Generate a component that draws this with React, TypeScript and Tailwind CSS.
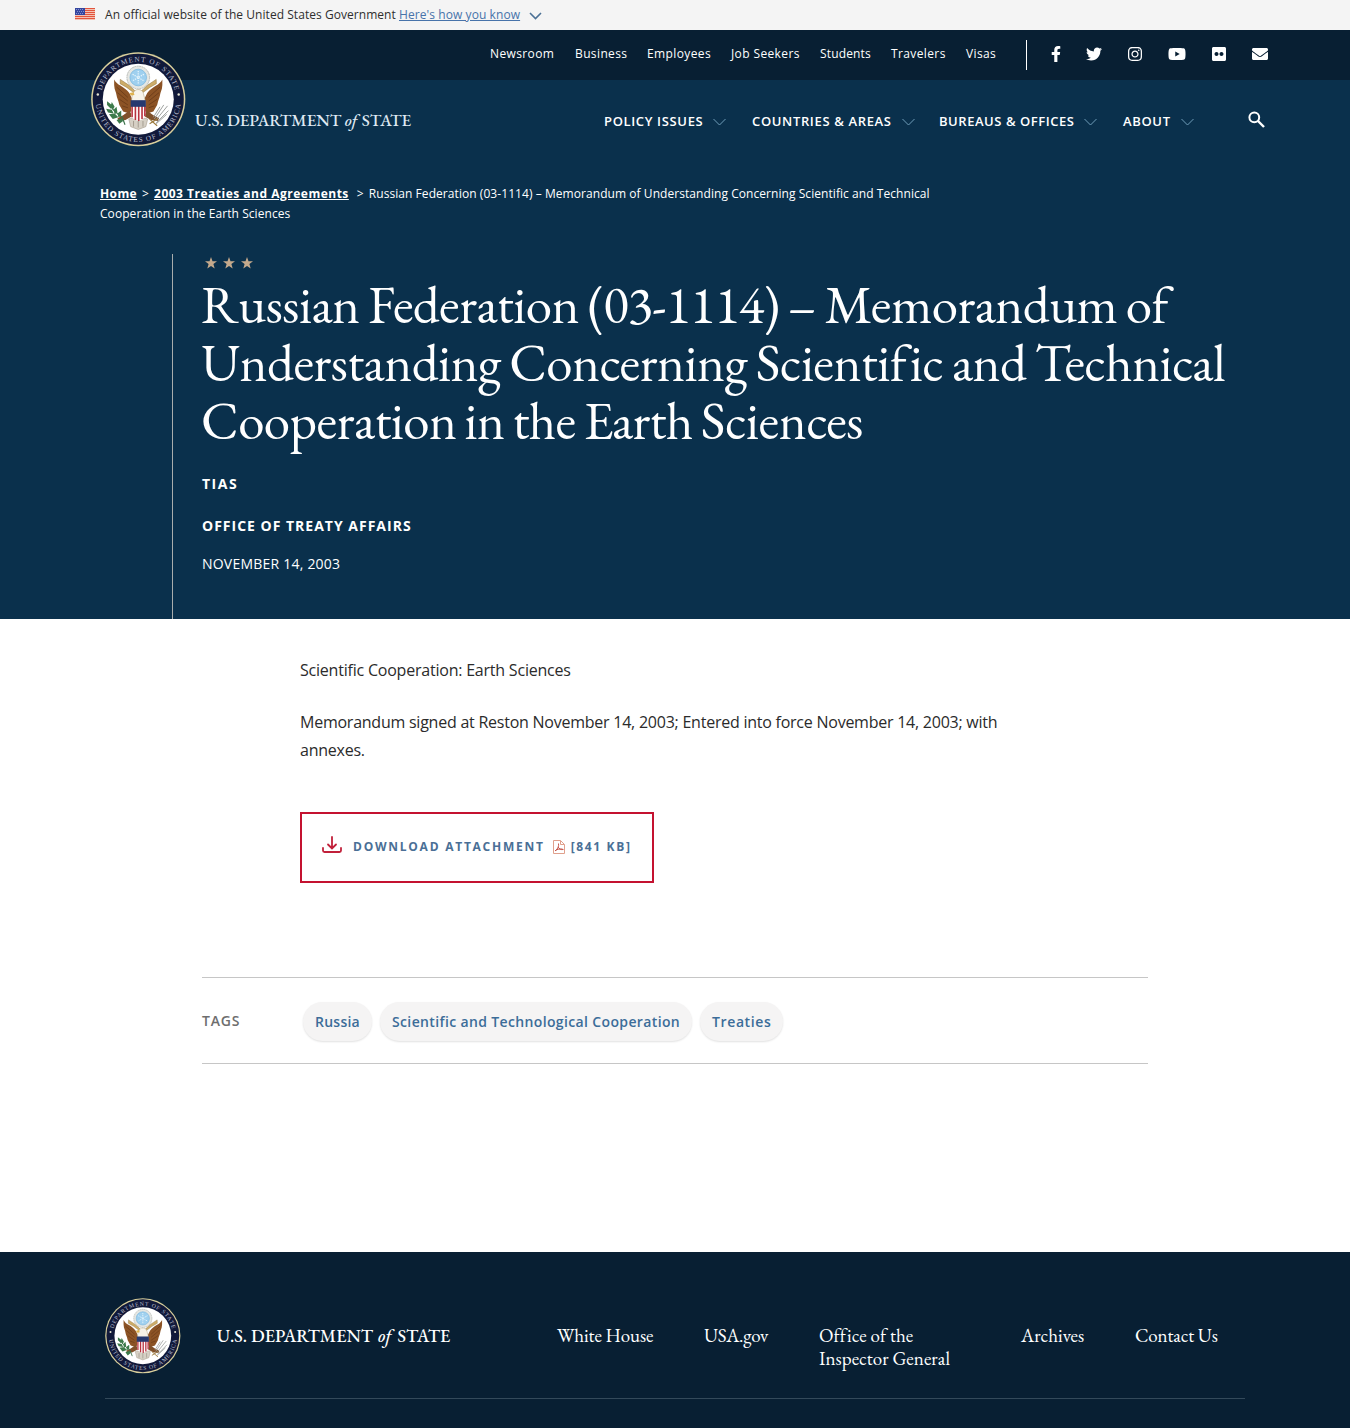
import React from "react";
import {
  FaFacebookF,
  FaTwitter,
  FaInstagram,
  FaYoutube,
  FaFlickr,
  FaEnvelope,
} from "react-icons/fa";

const SANS = "font-['Open_Sans','Noto_Sans',sans-serif]";
const SERIF = "font-['EB_Garamond','Liberation_Serif',serif]";

function Seal({ id, className }: { id: string; className: string }) {
  return (
    <svg viewBox="0 0 100 100" className={className} aria-label="Department of State seal">
      <defs>
        <path id={`${id}-top`} d="M 10.3 50 A 39.7 39.7 0 0 1 89.700 50" />
        <path id={`${id}-bottom`} d="M 4.800 50 A 45.200 45.200 0 0 0 95.200 50" />
      </defs>
      <circle cx="50" cy="50" r="49.8" fill="#d9cf9c" />
      <circle cx="50" cy="50" r="48.2" fill="#11193a" />
      <circle cx="50" cy="50" r="37.6" fill="#fff" />
      <text fill="#b9bfce" fontSize="7.700" fontFamily="Liberation Serif, serif" textAnchor="middle">
        <textPath href={`#${id}-top`} startOffset="50%" textLength="106">DEPARTMENT OF STATE</textPath>
      </text>
      <text fill="#b9bfce" fontSize="7.700" fontFamily="Liberation Serif, serif" textAnchor="middle">
        <textPath href={`#${id}-bottom`} startOffset="50%" textLength="131">UNITED STATES OF AMERICA</textPath>
      </text>
      <circle cx="7.2" cy="45" r="1.3" fill="#e5e3d2" />
      <circle cx="92.8" cy="45" r="1.3" fill="#e5e3d2" />
      {/* glory with constellation */}
      <circle cx="50" cy="27" r="12" fill="#e6e7e3" stroke="#b5b8b4" strokeWidth="1" strokeDasharray="2 .6" />
      <circle cx="50" cy="27" r="8.800" fill="#9fd0ef" stroke="#6fb1dd" strokeWidth=".7" />
      <path d="M50 20v14M44 23.500l12 7M56 23.500l-12 7" stroke="#e7f5fc" strokeWidth="1.300" strokeDasharray="1.400 1" />
      {/* wings */}
      <path d="M24.500 29c1.500 3 4 5 6.500 6.500 4 2.500 7 4.500 9.500 8l3 6v13l-4.500 2-5-1.500-2-3.500-2-3.500-1-4-1.500-4-1-4.500-1.500-4.500-.5-4z" fill="#8c5325" />
      <path d="M75.500 29c-1.500 3-4 5-6.500 6.500-4 2.500-7 4.500-9.500 8l-3 6v13l4.500 2 5-1.500 2-3.500 2-3.500 1-4 1.500-4 1-4.500 1.500-4.500.5-4z" fill="#8c5325" />
      <path d="M27 37l12 11M28 43l11 9M30 50l9 6M33 57l6 2M73 37l-12 11M72 43l-11 9M70 50l-9 6M67 57l-6 2" stroke="#5f3315" strokeWidth=".7" fill="none" />
      {/* ribbon */}
      <path d="M31 29l9 6 7 6.500-1.200 2-8-6-7-4zM69 29l-9 6-7 6.500 1.200 2 8-6 7-4z" fill="#cdac68" stroke="#8a6b35" strokeWidth=".5" />
      {/* legs and tail */}
      <path d="M41 62l-7 5-6 3 1.500 3 7-1 7-4zM59 62l7 5 6 3-1.500 3-7-1-7-4z" fill="#80502a" />
      <path d="M40 71c3-2 17-2 20 0l-2 8-8 3-8-3z" fill="#d6d0c5" stroke="#a39888" strokeWidth=".6" />
      <path d="M45 73v6M50 72v8M55 73v6" stroke="#8d8477" strokeWidth=".7" />
      {/* head */}
      <path d="M43 52c0-5 1-10 5-12 4-1 7 1 7.500 4l2 8z" fill="#f7f3e9" stroke="#b3a583" strokeWidth=".6" />
      <path d="M45 42.500l-4 1 1 2.500 4-.5z" fill="#dfb24c" />
      {/* shield */}
      <path d="M42.500 52h15v15c0 3-4 5-7.500 6-3.500-1-7.500-3-7.500-6z" fill="#fff" />
      <path d="M43.500 57v12M47 57v15M50.500 57v16M54 57v14M57 57v11" stroke="#b8323f" strokeWidth="1.700" />
      <path d="M42 51h16v7H42z" fill="#27396f" />
      {/* olive branch */}
      <path d="M19 55c3 5 8 10 14 14l3 8" fill="none" stroke="#39724a" strokeWidth="1.200" />
      <path d="M17 52l5 4-1 4-4-4zM22 53l3 5-2 3-2-4zM16 60l6 1 2 4-6-1zM27 58l1 6-3 2-1-5zM19 66l6-1 4 4-6 2zM32 62l0 6-3 1-1-4zM27 72l5-2 2 3-4 3z" fill="#3d7b4b" />
      {/* arrows */}
      <path d="M68 73l13-16M67 71l10-15M69 75l13-13M66 69l7-11M69 76l11-10" stroke="#999c9a" strokeWidth="1" />
      <path d="M62 71l8 7M62 76l8-5" stroke="#9c7a3d" strokeWidth="1.200" />
    </svg>
  );
}

function Flag() {
  const stripes = [0, 2, 4, 6, 8, 10];
  return (
    <svg viewBox="0 0 20 12" className="mb-[3px] h-3 w-5" aria-label="U.S. flag">
      <rect width="20" height="12" fill="#f6cfc0" />
      {stripes.map((y) => (
        <rect key={y} y={y} width="20" height="1.100" fill="#e2543c" />
      ))}
      <rect width="10" height="7" fill="#35469f" />
      <path d="M1 1.500h8M2 3.500h7M1 5.500h8" stroke="#98a3da" strokeWidth=".8" strokeDasharray="1 1" />
    </svg>
  );
}

function Chevron({ className }: { className: string }) {
  return (
    <svg viewBox="0 0 13 8" fill="none" className={className}>
      <path d="M.5 1l6 6 6-6" stroke="currentColor" />
    </svg>
  );
}

function Wordmark({ className, ofClass }: { className: string; ofClass: string }) {
  return (
    <span className={`${SERIF} block whitespace-nowrap font-medium ${className}`}>
      U.S. DEPARTMENT <i className={ofClass}>of</i> STATE
    </span>
  );
}

const utility = [
  ["Newsroom", "w-[85px]"],
  ["Business", "w-[72px]"],
  ["Employees", "w-[84px]"],
  ["Job Seekers", "w-[89px]"],
  ["Students", "w-[71px] tracking-[0.15px]"],
  ["Travelers", "w-[75px]"],
  ["Visas", "w-[60px]"],
];

const mainNav = [
  ["POLICY ISSUES", "w-[148px] tracking-[0.65px]"],
  ["COUNTRIES & AREAS", "w-[187px] tracking-[0.65px]"],
  ["BUREAUS & OFFICES", "w-[184px] tracking-[0.54px]"],
  ["ABOUT", "w-[125px] tracking-[0.65px]"],
];

const footerLinks = [
  ["White House", "w-[147px] tracking-[-0.1px]"],
  ["USA.gov", "w-[115px] tracking-[-0.3px]"],
  ["Office of the Inspector General", "w-[202px] pr-12 tracking-[0.05px]"],
  ["Archives", "w-[114px]"],
  ["Contact Us", "w-[110px] tracking-[-0.15px]"],
];

const tags = [
  ["Russia", "tracking-[0.25px]"],
  ["Scientific and Technological Cooperation", "tracking-[0.36px]"],
  ["Treaties", "tracking-[0.6px]"],
];

export default function App() {
  return (
    <div className={`${SANS} h-[1428px] w-[1350px] overflow-hidden bg-white text-[#2b2b2b]`}>
      <div className="flex h-[30px] items-center bg-[#f4f4f4] pl-[75px] text-[12px] tracking-[0.045px]">
        <Flag />
        <span className="ml-[10px] whitespace-pre text-[#2e2e2e]">An official website of the United States Government </span>
        <a className="text-[#4773aa] tracking-[0.08px] underline">Here's how you know</a>
        <svg viewBox="0 0 13 8" fill="none" className="ml-[9px] mt-[2px] h-2 w-[13px] text-[#4b7195]">
          <path d="M1 1l5.500 5.500L12 1" stroke="currentColor" strokeWidth="1.600" />
        </svg>
      </div>

      <header className="relative bg-[#0a304c] text-white">
        <div className="flex h-[50px] items-center bg-[#081f33] pl-[490px]">
          <nav className="flex pb-[3px] text-[12px] tracking-[0.38px]">
            {utility.map(([label, w]) => (
              <a key={label} className={`${w} whitespace-nowrap`}>{label}</a>
            ))}
          </nav>
          <div className="h-[30px] w-px bg-white" />
          <div className="flex items-center pb-[2px] text-[16px]">
            <FaFacebookF className="ml-[21px]" />
            <FaTwitter className="ml-[22px]" />
            <FaInstagram className="ml-[25px]" />
            <FaYoutube className="ml-[25px] h-4 w-[18px]" />
            <FaFlickr className="ml-[25px]" />
            <FaEnvelope className="ml-[25px]" />
          </div>
        </div>
        <Seal id="seal-header" className="absolute left-[91px] top-[22px] h-[94.500px] w-[94.500px]" />
        <div className="flex h-[90px] items-start">
          <Wordmark className="ml-[195px] mt-[28px] w-[409px] text-[17px] leading-6 tracking-[-0.08px] text-[#dfe8f2]" ofClass="mr-[1px]" />
          <nav className="mt-[32px] flex text-[13px] font-semibold leading-5">
            {mainNav.map(([label, w]) => (
              <a key={label} className={`${w} -mt-px flex items-center whitespace-nowrap`}>
                {label}
                <Chevron className="ml-[10px] mt-[2px] h-2 w-[13px] text-[#6f9cb8]" />
              </a>
            ))}
          </nav>
          <svg viewBox="0 0 17 17" fill="none" className="mt-[31px] h-[17px] w-[17px]">
            <circle cx="6.300" cy="6.300" r="4.900" stroke="#fff" strokeWidth="2" />
            <path d="M10 10l6 6" stroke="#fff" strokeWidth="2.400" />
          </svg>
        </div>
      </header>

      <section className="h-[449px] bg-[#0a304c] text-white">
        <div className="ml-[100px] w-[860px] pt-[14px] text-[12px] leading-5 tracking-[0.06px]">
          <a className="font-bold tracking-[0.4px] underline">Home</a>
          <span className="mx-[5px]">&gt;</span>
          <a className="font-bold tracking-[0.5px] underline">2003 Treaties and Agreements</a>
          <span className="ml-[8px] mr-[5px]">&gt;</span>
          Russian Federation (03-1114) – Memorandum of Understanding Concerning Scientific and Technical
          <br />
          Cooperation in the Earth Sciences
        </div>
        <div className="ml-[172px] mt-[30px] h-[365px] border-l border-[#a9adad] pl-[29px]">
          <div className="flex gap-[6px] pl-[3px] pt-[3px]">
            {[0, 1, 2].map((i) => (
              <svg key={i} viewBox="0 0 12 12" className="h-3 w-3 fill-[#c4a98c]">
                <path d="M6 0l1.500 4.200L12 4.300 8.400 7l1.300 4.500L6 8.900l-3.700 2.600L3.600 7 0 4.300l4.500-.1z" />
              </svg>
            ))}
          </div>
          <h1 className={`${SERIF} -ml-px mt-[7px] text-[53px] leading-[58px] tracking-[-0.5px] whitespace-nowrap`}>
            <span className="block [word-spacing:-1.6px]">
              Russian Federation <span className="tracking-[-1px]">(03-1114)</span> – Memorandum of
            </span>
            <span className="block [word-spacing:-1.4px]">Understanding Concerning Scientific and Technical</span>
            <span className="block [word-spacing:-2px]">Cooperation in the Earth Sciences</span>
          </h1>
          <p className="mt-[24px] text-[14px] font-bold leading-5 tracking-[1.5px]">TIAS</p>
          <p className="mt-[22px] text-[14px] font-bold leading-5 tracking-[1px]">OFFICE OF TREATY AFFAIRS</p>
          <p className="mt-[18px] text-[14px] leading-5 tracking-[0.22px]">NOVEMBER 14, 2003</p>
        </div>
      </section>

      <main className="h-[633px]">
        <div className="ml-[300px] w-[750px] pt-[37px] text-[16px] leading-7 tracking-[-0.24px]">
          <p className="tracking-[-0.215px]">Scientific Cooperation: Earth Sciences</p>
          <p className="mt-6">
            Memorandum signed at Reston November 14, 2003; Entered into force November 14, 2003; with
            <br />
            annexes.
          </p>
        </div>
        <a className="ml-[300px] mt-[48px] flex h-[71px] w-[354px] items-center border-2 border-[#c41230] pb-[2px] pl-5 text-[12px] font-bold tracking-[1.75px] text-[#4a6f96]">
          <svg viewBox="0 0 20 17" fill="none" className="mb-[4px] h-[17px] w-5" stroke="#c1203a" strokeWidth="1.800" strokeLinecap="round">
            <path d="M10 1v11M6 8.500l4 4 4-4M1 12v2.500Q1 16 2.500 16h15Q19 16 19 14.500V12" />
          </svg>
          <span className="ml-[11px]">DOWNLOAD ATTACHMENT</span>
          <svg viewBox="0 0 12 14" fill="none" className="ml-[8px] mr-[6px] h-[14px] w-3" stroke="#e0a08c">
            <path d="M.5.5h7l4 4v9H.500zM7.500.5v4h4" />
            <path d="M2 11c3-2 4-5 3.500-7.500M5 7c1 2 3 3 5.500 2.500M2.500 10.500c2-1.500 4-1.500 7-1.500" stroke="#c0453a" strokeWidth=".9" />
          </svg>
          <span className="tracking-[1.65px]">[841 KB]</span>
        </a>
        <div className="ml-[202px] mt-[94px] flex h-[87px] w-[946px] items-center border-y border-[#c6c6c6] text-[14px]">
          <span className="w-[101px] font-semibold tracking-[0.8px] text-[#6e6e6e]">TAGS</span>
          <div className="flex gap-[8px] pt-[2px]">
            {tags.map(([label, spacing]) => (
              <a key={label} className={`${spacing} flex h-[39px] items-center whitespace-nowrap rounded-[20px] bg-[#f5f4f4] px-3 font-semibold text-[#3c6d99] shadow-[0_1px_2px_rgba(0,0,0,0.12)]`}>
                {label}
              </a>
            ))}
          </div>
        </div>
      </main>

      <footer className="h-[176px] bg-[#081f33] px-[105px] pt-[46px] text-white">
        <div className="flex h-[101px] items-start border-b border-[#33495a]">
          <Seal id="seal-footer" className="h-[75.500px] w-[76px]" />
          <Wordmark className="ml-[36px] mt-[26px] w-[341px] text-[18px] leading-6 tracking-[0.03px]" ofClass="ml-[1px] mr-[2px]" />
          <nav className={`${SERIF} ml-px mt-[26px] flex text-[19px] leading-[23px]`}>
            {footerLinks.map(([label, w]) => (
              <a key={label} className={`${w} shrink-0`}>{label}</a>
            ))}
          </nav>
        </div>
      </footer>
    </div>
  );
}
